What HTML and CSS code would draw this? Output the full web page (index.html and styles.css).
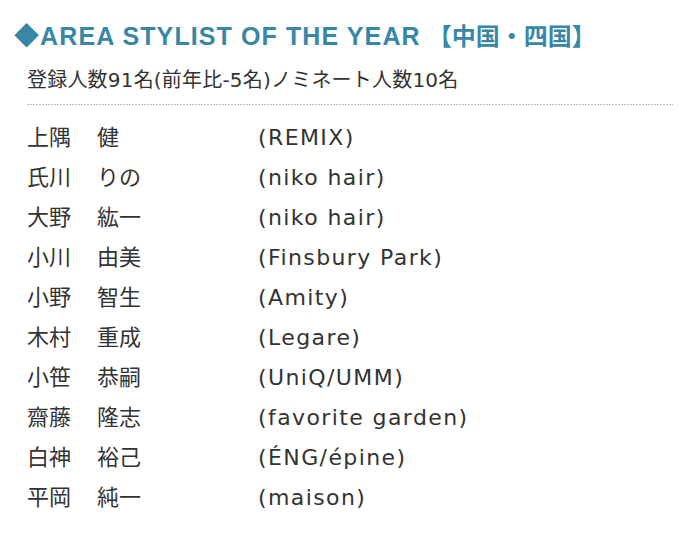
FILE: index.html
```html
<!DOCTYPE html>
<html lang="ja">
<head>
<meta charset="utf-8">
<link rel="stylesheet" href="styles.css">
</head>
<body>
<section class="area">
  <h2 class="title"><span class="title-en">◆AREA STYLIST OF THE YEAR</span> <span class="title-ja">【中国・四国】</span></h2>
  <div class="body">
    <p class="summary">登録人数91名(前年比-5名)ノミネート人数10名</p>
    <div class="rule"></div>
    <div class="list">
      <span class="sei">上隅</span><span class="mei">健</span><span class="salon">(REMIX)</span>
      <span class="sei">氏川</span><span class="mei">りの</span><span class="salon">(niko hair)</span>
      <span class="sei">大野</span><span class="mei">紘一</span><span class="salon">(niko hair)</span>
      <span class="sei">小川</span><span class="mei">由美</span><span class="salon">(Finsbury Park)</span>
      <span class="sei">小野</span><span class="mei">智生</span><span class="salon">(Amity)</span>
      <span class="sei">木村</span><span class="mei">重成</span><span class="salon">(Legare)</span>
      <span class="sei">小笹</span><span class="mei">恭嗣</span><span class="salon">(UniQ/UMM)</span>
      <span class="sei">齋藤</span><span class="mei">隆志</span><span class="salon">(favorite garden)</span>
      <span class="sei">白神</span><span class="mei">裕己</span><span class="salon">(ÉNG/épine)</span>
      <span class="sei">平岡</span><span class="mei">純一</span><span class="salon">(maison)</span>
    </div>
  </div>
</section>
</body>
</html>
```
FILE: styles.css
```css
html, body {
  margin: 0;
  padding: 0;
  background: #fff;
}
body {
  font-family: "DejaVu Sans", "Noto Sans CJK JP", sans-serif;
  color: #333;
}
.area {
  padding: 18px 15px 0 14px;
}
.title {
  margin: 0;
  font-family: "Liberation Sans", "Noto Sans CJK JP", sans-serif;
  font-size: 25px;
  line-height: 34px;
  font-weight: bold;
  color: #3887a6;
  white-space: nowrap;
}
.title-en {
  letter-spacing: 1.1px;
}
.title-ja {
  font-family: "Noto Sans CJK JP", sans-serif;
  font-size: 24px;
}
.body {
  padding-left: 13px;
}
.summary {
  margin: 13px 0 0 0;
  font-family: "DejaVu Sans", "Noto Sans CJK JP", sans-serif;
  font-size: 20px;
  line-height: 28px;
  letter-spacing: 0.2px;
  color: #333;
}
.rule {
  margin-top: 10px;
  height: 1px;
  background-image: repeating-linear-gradient(to right, #bbb 0 2px, transparent 2px 3px);
}
.list {
  display: grid;
  grid-template-columns: 70px 161px auto;
  grid-auto-rows: 40px;
  align-items: baseline;
  margin-top: 10px;
  color: #333;
}
.list span {
  line-height: 40px;
  white-space: nowrap;
}
.sei,
.mei {
  font-family: "Noto Sans CJK JP", sans-serif;
  font-size: 22px;
}
.salon {
  font-family: "DejaVu Sans", "Noto Sans CJK JP", sans-serif;
  font-size: 22px;
  letter-spacing: 1.4px;
}
```
